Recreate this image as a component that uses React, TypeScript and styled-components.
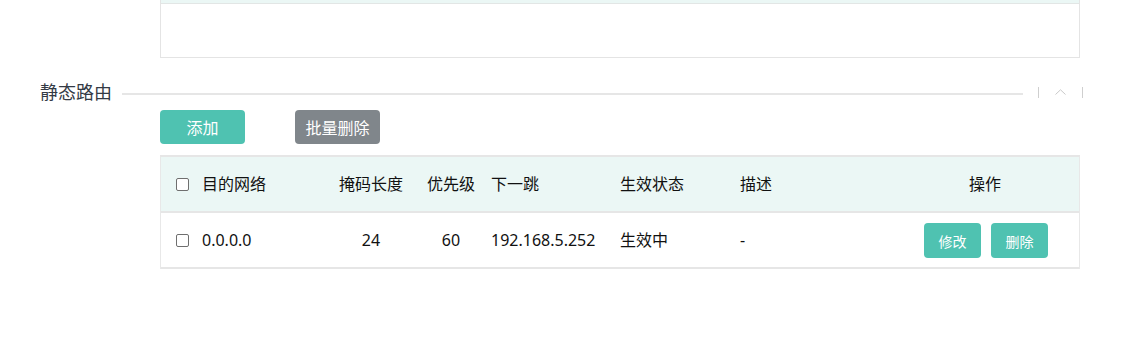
import React from "react";
import styled, { createGlobalStyle } from "styled-components";

const Global = createGlobalStyle`
  html, body { margin: 0; padding: 0; background: #ffffff; }
  body { font-family: "Noto Sans", "Noto Sans CJK SC", sans-serif; color: #222; }
`;

const Page = styled.div`
  width: 1145px;
  height: 340px;
  overflow: hidden;
  display: flex;
  flex-direction: column;
`;

const PrevPanel = styled.div`
  margin-left: 160px;
  width: 920px;
  height: 58px;
  box-sizing: border-box;
  border: 1px solid #e4e4e4;
  border-top: none;
  display: flex;
  flex-direction: column;
`;

const PrevStrip = styled.div`
  height: 3px;
  background: #ebf7f5;
  border-bottom: 1px solid #e2e6e5;
`;

const SectionHeader = styled.div`
  margin-top: 21px;
  height: 24px;
  padding-left: 40px;
  display: flex;
  align-items: center;
`;

const SectionTitle = styled.div`
  font-family: "Noto Sans CJK SC", sans-serif;
  font-size: 18px;
  line-height: 24px;
  color: #333a45;
`;

const Rule = styled.div`
  margin-left: 10px;
  width: 901px;
  height: 2px;
  margin-top: 6px;
  background: #e6e6e6;
`;

const Bar = styled.div`
  width: 1px;
  height: 11px;
  margin-top: 3px;
  background: #cfcfcf;
`;

const Collapse = styled.div<{ $gap: number }>`
  display: flex;
  align-items: center;
  margin-left: ${(p) => p.$gap}px;
`;

const ChevronBox = styled.div`
  width: 43px;
  display: flex;
  justify-content: center;
  align-items: center;
  margin-top: 1px;
`;

const Toolbar = styled.div`
  margin-top: 7px;
  padding-left: 160px;
  display: flex;
  gap: 50px;
`;

const Button = styled.button<{ $tone: "teal" | "gray" }>`
  width: 85px;
  height: 34px;
  border: none;
  border-radius: 4px;
  background: ${(p) => (p.$tone === "teal" ? "#4fc2b1" : "#80868b")};
  color: #fff;
  font-family: "Noto Sans CJK SC", sans-serif;
  font-size: 16px;
  line-height: 34px;
  padding: 0;
  cursor: pointer;
`;

const Table = styled.div`
  margin-top: 11px;
  margin-left: 160px;
  width: 920px;
  box-sizing: border-box;
  border-left: 1px solid #e8e8e8;
  border-right: 1px solid #e8e8e8;
  border-top: 2px solid #e6e6e6;
`;

const Row = styled.div<{ $head?: boolean }>`
  display: grid;
  grid-template-columns: 41px 129px 80px 80px 129px 120px 151px 1fr;
  height: 54px;
  align-items: center;
  background: ${(p) => (p.$head ? "#ebf7f5" : "#ffffff")};
  border-bottom: 2px solid #e6e6e6;
  font-family: "Noto Sans", "Noto Sans CJK SC", sans-serif;
  font-size: 16px;
  color: #111;
`;

const Cell = styled.div<{ $align?: "left" | "center" }>`
  text-align: ${(p) => p.$align ?? "left"};
  white-space: nowrap;
  line-height: 22px;
  font-family: "Noto Sans", "Noto Sans CJK SC", sans-serif;
`;

const CheckCell = styled.div`
  display: flex;
  align-items: center;
  padding-left: 15px;
`;

const Check = styled.input.attrs({ type: "checkbox" })`
  appearance: none;
  margin: 0;
  width: 13px;
  height: 13px;
  box-sizing: border-box;
  border: 1px solid #6f6f6f;
  border-radius: 2px;
  background: #fff;
`;

const Actions = styled.div`
  display: flex;
  justify-content: center;
  gap: 10px;
  padding-left: 2px;
`;

const ActionButton = styled.button`
  width: 57px;
  height: 35px;
  border: none;
  border-radius: 4px;
  background: #4fc2b1;
  color: #fff;
  font-family: "Noto Sans CJK SC", sans-serif;
  font-size: 14px;
  padding: 0;
  margin-top: 1px;
`;

export default function App() {
  return (
    <Page>
      <Global />
      <PrevPanel>
        <PrevStrip />
      </PrevPanel>
      <SectionHeader>
        <SectionTitle>静态路由</SectionTitle>
        <Rule />
        <Collapse $gap={15}>
          <Bar />
          <ChevronBox>
            <svg width="11" height="6" viewBox="0 0 11 6">
              <polyline points="0.5,5.5 5.5,0.8 10.5,5.5" fill="none" stroke="#c9c9c9" strokeWidth="1" />
            </svg>
          </ChevronBox>
          <Bar />
        </Collapse>
      </SectionHeader>
      <Toolbar>
        <Button $tone="teal">添加</Button>
        <Button $tone="gray">批量删除</Button>
      </Toolbar>
      <Table>
        <Row $head>
          <CheckCell>
            <Check />
          </CheckCell>
          <Cell>目的网络</Cell>
          <Cell $align="center">掩码长度</Cell>
          <Cell $align="center">优先级</Cell>
          <Cell>下一跳</Cell>
          <Cell>生效状态</Cell>
          <Cell>描述</Cell>
          <Cell $align="center">操作</Cell>
        </Row>
        <Row>
          <CheckCell>
            <Check />
          </CheckCell>
          <Cell>0.0.0.0</Cell>
          <Cell $align="center">24</Cell>
          <Cell $align="center">60</Cell>
          <Cell>192.168.5.252</Cell>
          <Cell>生效中</Cell>
          <Cell>-</Cell>
          <Actions>
            <ActionButton>修改</ActionButton>
            <ActionButton>删除</ActionButton>
          </Actions>
        </Row>
      </Table>
    </Page>
  );
}
